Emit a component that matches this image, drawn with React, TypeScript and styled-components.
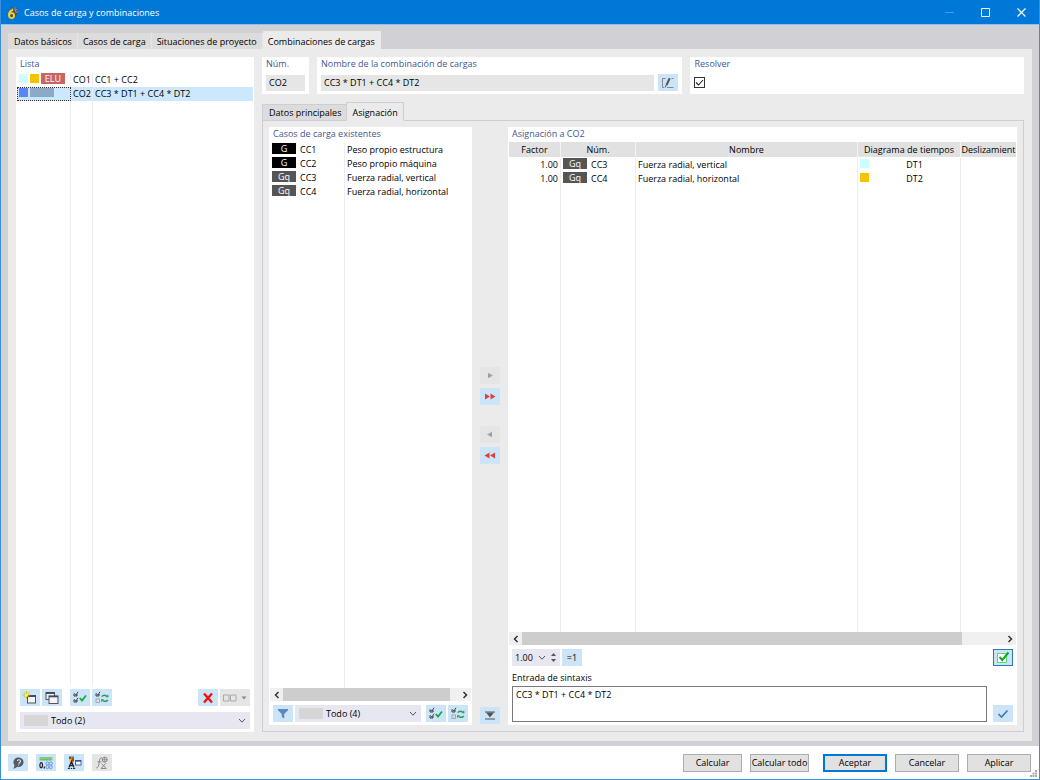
import React from 'react';
import styled, { createGlobalStyle, css } from 'styled-components';

const GlobalStyle = createGlobalStyle`
  *, *::before, *::after { box-sizing: border-box; }
  html, body, #root { height: 100%; margin: 0; }
  body, button, input, select, textarea {
    font-family: "Open Sans", "Noto Sans", sans-serif;
    font-size: 9px;
    line-height: 14px;
    color: #000;
  }
  svg { display: block; flex: none; }
`;

const color = {
  accent: '#0078d7',
  frame: '#d0d0d5',
  surface: '#ebebeb',
  line: '#cdcdd6',
  heading: '#3f5690',
  tool: '#cce4f7',
  toolOff: '#e5e5e5',
  field: '#e6e6e6',
  combo: '#e7e7f2',
};

const Window = styled.div`
  display: flex;
  flex-direction: column;
  min-height: 100vh;
  background: #fff;
  border: 1px solid #3a8fdc;
  border-top: 0;
`;

const TitleBar = styled.header`
  display: flex;
  align-items: center;
  height: 25px;
  padding: 1px 0 0 6px;
  background: ${color.accent};
  color: #fff;
  border-bottom: 1px solid #8fc0ec;
`;

const Title = styled.h1`
  flex: 1;
  margin: 0;
  padding-left: 5px;
  font-size: 9px;
  font-weight: 400;
`;

const CaptionButton = styled.button`
  display: grid;
  place-items: center;
  width: 36px;
  height: 23px;
  padding: 0;
  border: 0;
  background: none;
  color: #fff;
  &:disabled { color: #4a9de3; }
`;

const Workspace = styled.main`
  flex: 1;
  display: flex;
  flex-direction: column;
  padding: 6px 7px 5px;
  background: ${color.frame};
`;

const TabList = styled.div<{ $framed?: boolean }>`
  display: flex;
  align-items: flex-end;
  position: relative;
  z-index: 1;
  ${p => p.$framed && css`margin-bottom: -1px;`}
`;

const Tab = styled.button<{ $active?: boolean; $framed?: boolean }>`
  height: ${p => (p.$active ? 18 : 16)}px;
  padding: ${p => (p.$active ? 3 : 1)}px 5px 0;
  border: 0;
  border-right: 1px solid ${p => (p.$active ? color.surface : '#e6e6e6')};
  background: ${p => (p.$active ? color.surface : '#dcdcdc')};
  font-weight: 500;
  white-space: nowrap;
  ${p => p.$framed && css`
    height: ${p.$active ? 19 : 17}px;
    padding: ${p.$active ? 2 : 0}px 5px 0;
    border: 1px solid ${color.line};
    border-bottom-color: ${p.$active ? color.surface : color.line};
    border-right-width: ${p.$active ? 1 : 0}px;
  `}
  &:first-child { padding-left: 6px; }
`;

const Body = styled.div`
  flex: 1;
  display: flex;
  gap: 8px;
  padding: 8px 8px 9px;
  background: ${color.surface};
`;

const Panel = styled.section`
  display: flex;
  flex-direction: column;
  min-width: 0;
  background: #fff;
`;

const ListPanel = styled(Panel)`
  flex: 0 0 238px;
`;

const PanelHeading = styled.h2<{ $short?: boolean }>`
  margin: 0;
  height: ${p => (p.$short ? 15 : 16)}px;
  padding: 0 4px;
  font-size: 9px;
  line-height: 14px;
  font-weight: 500;
  color: ${color.heading};
`;

const TableArea = styled.div`
  flex: 1;
  display: grid;
  min-height: 0;
  padding: 0 1px;
  overflow: hidden;
`;

const Table = styled.table`
  width: 100%;
  height: 100%;
  table-layout: fixed;
  border-collapse: separate;
  border-spacing: 0;
`;

const Row = styled.tr<{ $selected?: boolean }>`
  height: 14px;
  background: ${p => (p.$selected ? '#cce8ff' : 'none')};
`;

const FillRow = styled.tr`
  height: 100%;
`;

const Cell = styled.td<{ $align?: 'right' | 'center'; $focus?: boolean }>`
  height: 14px;
  padding: 0 2px;
  line-height: 14px;
  text-align: ${p => p.$align || 'left'};
  white-space: nowrap;
  overflow: hidden;
  border-right: 1px solid #ededed;
  &:last-child { border-right: 0; }
  ${p => p.$focus && css`
    outline: 1px dotted #333;
    outline-offset: -1px;
  `}
`;

const HeadCell = styled.th`
  height: 16px;
  padding: 0;
  font-weight: 500;
  line-height: 14px;
  text-align: center;
  white-space: nowrap;
  overflow: hidden;
  background: #e1e1e1;
  background-clip: padding-box;
  border-right: 1px solid #f4f4f4;
  border-bottom: 1px solid #fff;
  &:last-child { border-right: 0; }
`;

const Inline = styled.div<{ $gap?: number }>`
  display: flex;
  align-items: flex-start;
  gap: ${p => p.$gap ?? 2}px;
  height: 14px;
`;

const CenteredText = styled.span`
  flex: 1;
  text-align: center;
`;

const Swatch = styled.span<{ $color: string; $wide?: boolean }>`
  width: ${p => (p.$wide ? 24 : 9)}px;
  height: 9px;
  margin-top: 1px;
  flex: none;
  background: ${p => p.$color};
`;

const Badge = styled.span<{ $color: string }>`
  width: 24px;
  height: 11px;
  flex: none;
  background: ${p => p.$color};
  color: #fff;
  line-height: 11px;
  text-align: center;
`;

const Toolbar = styled.div<{ $inset?: string }>`
  display: flex;
  align-items: center;
  gap: 2px;
  padding: ${p => p.$inset || '0 4px'};
`;

const Spacer = styled.div<{ $size?: number }>`
  flex: ${p => (p.$size === undefined ? '1' : `0 0 ${p.$size}px`)};
`;

const ToolButton = styled.button<{ $wide?: boolean; $pressed?: boolean }>`
  display: flex;
  align-items: center;
  justify-content: center;
  gap: 4px;
  flex: none;
  width: ${p => (p.$wide ? 30 : 20)}px;
  height: 17px;
  padding: 0;
  border: ${p => (p.$pressed ? '1px solid #2b78c0' : '0')};
  background: ${color.tool};
  font-weight: 500;
  &:disabled { background: ${color.toolOff}; color: #999; }
`;

const Combo = styled.div`
  flex: 1;
  display: flex;
  align-items: center;
  height: 17px;
  padding: 0 4px;
  background: ${color.combo};
`;

const ComboSwatch = styled.span`
  width: 24px;
  height: 11px;
  background: #d6d6d6;
`;

const ComboSelect = styled.select`
  flex: 1;
  min-width: 0;
  height: 17px;
  padding: 0 3px;
  border: 0;
  appearance: none;
  background: none;
  font-weight: 500;
`;

const Detail = styled.div`
  flex: 1;
  display: flex;
  flex-direction: column;
  min-width: 0;
`;

const SummaryRow = styled.div`
  display: flex;
  gap: 8px;
  height: 37px;
  margin-bottom: 8px;
`;

const SummaryPanel = styled(Panel)<{ $basis: string }>`
  flex: ${p => p.$basis};
`;

const FieldLabel = styled.label`
  height: 17px;
  padding: 0 4px;
  font-weight: 500;
  color: ${color.heading};
`;

const FieldRow = styled.div`
  display: flex;
  align-items: center;
  gap: 4px;
  height: 17px;
  padding: 0 4px;
`;

const ReadOnlyField = styled.input`
  flex: 1;
  min-width: 0;
  height: 16px;
  padding: 0 3px;
  border: 0;
  background: ${color.field};
`;

const CheckWrap = styled.span`
  display: grid;
  > * { grid-area: 1 / 1; }
  svg { pointer-events: none; }
`;

const CheckInput = styled.input`
  appearance: none;
  width: 11px;
  height: 11px;
  margin: 0;
  border: 1px solid #333;
  background: #fff;
`;

const TabPage = styled.div`
  flex: 1;
  display: flex;
  padding: 6px;
  border: 1px solid ${color.line};
`;

const SourcePanel = styled(Panel)`
  flex: 0 0 203px;
  padding-bottom: 3px;
`;

const TransferColumn = styled.div`
  flex: 0 0 36px;
  display: flex;
  flex-direction: column;
  align-items: center;
  padding-bottom: 1px;
`;

const TransferGroup = styled.div`
  flex: 1;
  display: flex;
  flex-direction: column;
  align-items: center;
  justify-content: center;
  gap: 4px;
  padding-bottom: 3px;
`;

const TargetPanel = styled(Panel)`
  flex: 1;
  padding-bottom: 3px;
`;

const ScrollTrack = styled.div`
  display: flex;
  height: 13px;
  margin: 0 1px;
  background: #f0f0f0;
`;

const ScrollArrow = styled.button`
  display: grid;
  place-items: center;
  width: 13px;
  height: 13px;
  padding: 0;
  border: 0;
  background: none;
`;

const ScrollPart = styled.div<{ $share: number; $thumb?: boolean }>`
  flex: ${p => p.$share};
  background: ${p => (p.$thumb ? '#cdcdcd' : 'none')};
`;

const FactorBox = styled.div`
  display: flex;
  align-items: center;
  gap: 2px;
  width: 48px;
  height: 17px;
  padding: 0 4px 0 3px;
  background: ${color.combo};
`;

const FactorInput = styled.input`
  flex: 1;
  min-width: 0;
  padding: 0;
  border: 0;
  background: none;
`;

const SpinColumn = styled.div`
  display: flex;
  flex-direction: column;
  gap: 3px;
  margin-left: 3px;
`;

const GlyphButton = styled.button`
  padding: 0;
  border: 0;
  background: none;
`;

const SyntaxLabel = styled.label`
  height: 20px;
  padding: 5px 4px 0;
  font-weight: 500;
`;

const SyntaxRow = styled.div`
  display: flex;
  align-items: flex-end;
  gap: 6px;
  padding: 0 4px;
`;

const SyntaxInput = styled.textarea`
  flex: 1;
  height: 36px;
  padding: 1px 3px;
  border: 1px solid #7a7a7a;
  resize: none;
  background: #fff;
`;

const Footer = styled.footer`
  position: relative;
  display: flex;
  align-items: center;
  gap: 8px;
  height: 33px;
  padding: 0 8px 0 7px;
`;

const DialogButton = styled.button<{ $primary?: boolean }>`
  width: 64px;
  height: 18px;
  margin-left: ${p => (p.$primary ? 6 : 0)}px;
  padding: 0;
  background: #e1e1e1;
  border: ${p => (p.$primary ? `2px solid ${color.accent}` : '1px solid #adadad')};
  font-weight: 500;
  line-height: 14px;
`;

const NarrowButton = styled(DialogButton)`
  width: 59px;
`;

const SizeGrip = styled.div`
  position: absolute;
  right: 1px;
  bottom: 1px;
`;

const AppIcon = () => (
  <svg width="12" height="14" viewBox="0 0 12 14">
    <path d="M4 1l6 1 1 5-3 4-5 0z" fill="#46535e" />
    <path d="M5 2l1 2M8 1.500l0 3M10 3l-2 2M11 6l-3 0" stroke="#a9b7c2" strokeWidth=".8" />
    <path d="M6 4C3.400 4.600 2 7 2 9.400" fill="none" stroke="#ffce1f" strokeWidth="2" />
    <circle cx="4.600" cy="9.600" r="2.500" fill="none" stroke="#ffce1f" strokeWidth="1.900" />
  </svg>
);

const Chevron = () => (
  <svg width="8" height="6" viewBox="0 0 8 6">
    <path d="M1 1l3 3.200L7 1" fill="none" stroke="#555" strokeWidth="1" />
  </svg>
);

const Arrow = ({ left }: { left?: boolean }) => (
  <svg width="6" height="8" viewBox="0 0 6 8">
    <path d={left ? 'M4.500 1L1.500 4l3 3' : 'M1.500 1l3 3-3 3'} fill="none" stroke="#333" strokeWidth="1.500" />
  </svg>
);

const Tri = ({ dir, fill, double }: { dir: 'l' | 'r'; fill: string; double?: boolean }) => (
  <svg width="12" height="7" viewBox="0 0 12 7" fill={fill}>
    {double ? (
      dir === 'r' ? <path d="M1 .5l5 3-5 3zM6.500.5l5 3-5 3z" /> : <path d="M5.500.5l-5 3 5 3zM11 .5l-5 3 5 3z" />
    ) : (
      dir === 'r' ? <path d="M4 .8l5 2.700-5 2.700z" /> : <path d="M8 .8L3 3.500l5 2.700z" />
    )}
  </svg>
);

const NewIcon = () => (
  <svg width="16" height="14" viewBox="0 0 16 14">
    <rect x="5.500" y="4.500" width="8" height="7.500" fill="#f4f4f4" stroke="#555" />
    <path d="M5 5.200h9" stroke="#446" strokeWidth="1.600" />
    <path d="M4.500 0v8M.5 4h8M1.600 1.200l5.800 5.600M7.400 1.200L1.600 6.800" stroke="#c9b800" strokeWidth=".8" />
    <circle cx="4.500" cy="4" r="1.800" fill="#fff04a" />
  </svg>
);

const CopyIcon = () => (
  <svg width="14" height="14" viewBox="0 0 14 14">
    <rect x="1" y="1.500" width="8.500" height="7" fill="#e9f3fb" stroke="#555" />
    <path d="M1 2h8.500" stroke="#444" strokeWidth="1.800" />
    <rect x="4" y="5" width="9" height="7.500" fill="#f4f4f4" stroke="#555" />
    <path d="M4 5.500h9" stroke="#446" strokeWidth="1.600" />
  </svg>
);

const CheckAllIcon = ({ swap }: { swap?: boolean }) => (
  <svg width="14" height="13" viewBox="0 0 14 13" fill="none">
    <path d="M1 2.500v2.500h3V3M1.600 2.600l1.200 1.600L5 .8" stroke="#333" strokeWidth=".9" />
    {swap ? (
      <>
        <rect x="1" y="8" width="3.500" height="3.500" stroke="#999" strokeWidth=".8" />
        <path d="M6.800 5.600c1.200-1.600 3-1.600 4.700-.6M12.800 9c-1.200 1.600-3 1.600-4.700.6" stroke="#2c9a53" strokeWidth="1.500" />
        <path d="M10.500 6.300h3l-.4-3zM9 8.200H6l.4 3z" fill="#2c9a53" />
      </>
    ) : (
      <>
        <path d="M1 8.500V11h3V9M1.600 8.600l1.200 1.600L5 6.800" stroke="#333" strokeWidth=".9" />
        <path d="M6.800 7l2.200 2.600L13 4.500" stroke="#18a848" strokeWidth="1.800" />
      </>
    )}
  </svg>
);

const DeleteIcon = () => (
  <svg width="12" height="12" viewBox="0 0 12 12">
    <path d="M2 1.500l8 9M10 1.500l-8 9" stroke="#ee1111" strokeWidth="2.400" />
  </svg>
);

const PairIcon = () => (
  <svg width="14" height="8" viewBox="0 0 14 8" fill="none" stroke="#a8a8a8">
    <path d="M.5 1h5.500v6H.5zM7.500 1H13v6H7.500z" />
  </svg>
);

const DownIcon = () => (
  <svg width="6" height="4" viewBox="0 0 6 4"><path d="M.5.500h5l-2.500 3z" fill="#888" /></svg>
);

const EditIcon = () => (
  <svg width="14" height="12" viewBox="0 0 14 12" fill="none">
    <path d="M4.500 1.500H1.500v9H3.500M6 10.500h6.500M10.500 1.500h2" stroke="#888" />
    <path d="M5.500 8L8.700 1.200" stroke="#555" strokeWidth="2" />
    <path d="M4.500 10.300l.6-2.300" stroke="#555" />
  </svg>
);

const FilterIcon = () => (
  <svg width="12" height="11" viewBox="0 0 12 11">
    <path d="M1 1h10v1.200L7.200 6v4.500L4.800 9V6L1 2.200z" fill="#5f86bf" />
  </svg>
);

const CollapseIcon = () => (
  <svg width="12" height="9" viewBox="0 0 12 9">
    <path d="M1 1h10M1 8h10" stroke="#555" strokeWidth="1.200" />
    <path d="M2 1.500h8L6 6.500z" fill="#555" />
  </svg>
);

const GreenCheckIcon = () => (
  <svg width="14" height="13" viewBox="0 0 14 13" fill="none">
    <rect x="1.500" y="2.500" width="9" height="9" fill="#fff" stroke="#5fd96a" />
    <path d="M3.500 6l2.800 3L12.500 1.500" stroke="#11a52c" strokeWidth="2" />
  </svg>
);

const BlueCheckIcon = () => (
  <svg width="12" height="10" viewBox="0 0 12 10">
    <path d="M1.500 5l3 3L10.500 1.500" fill="none" stroke="#4477b8" strokeWidth="1.700" />
  </svg>
);

const HelpIcon = () => (
  <svg width="14" height="14" viewBox="0 0 14 14">
    <path d="M8 1.500a4.700 4.700 0 1 1-1.500 9.200L2.500 13l1-4A4.700 4.700 0 0 1 8 1.500z" fill="#555b60" />
    <path d="M6.300 5c.3-1.600 3.200-1.600 3.200.2 0 1.300-1.600 1.200-1.700 2.600M7.600 8.600v1" fill="none" stroke="#dbeaf6" strokeWidth="1.100" />
  </svg>
);

const DecimalsIcon = () => (
  <svg width="16" height="14" viewBox="0 0 16 14">
    <rect x="1.500" y="1" width="13" height="3.500" fill="#7fc97f" />
    <path d="M4 3v1.500M6.500 3v1.500M9 3v1.500M11.500 3v1.500" stroke="#4c9a55" strokeWidth=".7" />
    <ellipse cx="3.200" cy="9.200" rx="1.300" ry="2.500" fill="none" stroke="#222" strokeWidth="1.200" />
    <path d="M6.300 10.500v2" stroke="#222" strokeWidth="1.200" />
    <g fill="#c3d8f8" stroke="#5b8ee0" strokeWidth=".8">
      <ellipse cx="9.400" cy="7.500" rx="1.500" ry="1.700" /><ellipse cx="12.800" cy="7.500" rx="1.500" ry="1.700" />
      <ellipse cx="9.400" cy="11" rx="1.500" ry="1.700" /><ellipse cx="12.800" cy="11" rx="1.500" ry="1.700" />
    </g>
  </svg>
);

const DisplayIcon = () => (
  <svg width="15" height="14" viewBox="0 0 15 14">
    <path d="M2 .5h2.500V3H2z" fill="#e02020" /><path d="M4.500.5H7V3H4.500z" fill="#18a830" />
    <path d="M2 3h2.500v2.500H2z" fill="#e8d000" /><path d="M4.500 3H7v2.500H4.500z" fill="#d02020" />
    <path d="M2 11.500L4.500 5.500l2.500 6M3 9.500h3" stroke="#222" strokeWidth="1.300" fill="none" />
    <path d="M.8 12.500h2M3.800 12.500h1.400M6.200 12.500h2" stroke="#222" />
    <rect x="8.500" y="4.500" width="5.500" height="4.500" fill="#fff" stroke="#335a9c" strokeWidth=".9" />
    <path d="M8.500 5H14" stroke="#224a9c" strokeWidth="1.300" />
  </svg>
);

const FormulaIcon = () => (
  <svg width="14" height="14" viewBox="0 0 14 14" fill="none" stroke="#888">
    <path d="M7 1.800C5 1.300 4.700 3.500 4.300 6S3.500 12 1.200 12M2.300 5.800h4M6.500 7.500l4.200 4.500M10.700 7.500L6.500 12M6 12.500h5.500" strokeWidth="1" />
    <circle cx="9.700" cy="3.700" r="2.500" fill="#ddd" />
    <path d="M9.700 1v5.400M7 3.700h5.400" strokeWidth=".8" />
  </svg>
);

const loadCases = [
  { no: 'CC1', tag: 'G', name: 'Peso propio estructura' },
  { no: 'CC2', tag: 'G', name: 'Peso propio máquina' },
  { no: 'CC3', tag: 'Gq', name: 'Fuerza radial, vertical' },
  { no: 'CC4', tag: 'Gq', name: 'Fuerza radial, horizontal' },
];

const assigned = [
  { factor: '1.00', no: 'CC3', name: 'Fuerza radial, vertical', diagram: 'DT1', tint: '#ccffff' },
  { factor: '1.00', no: 'CC4', name: 'Fuerza radial, horizontal', diagram: 'DT2', tint: '#f5c400' },
];

const ScrollBar = ({ share, rest }: { share: number; rest: number }) => (
  <ScrollTrack>
    <ScrollArrow aria-label="Desplazar a la izquierda"><Arrow left /></ScrollArrow>
    <ScrollPart $thumb $share={share} />
    <ScrollPart $share={rest} />
    <ScrollArrow aria-label="Desplazar a la derecha"><Arrow /></ScrollArrow>
  </ScrollTrack>
);

const FilterCombo = ({ text }: { text: string }) => (
  <Combo>
    <ComboSwatch />
    <ComboSelect aria-label="Filtro" defaultValue={text}>
      <option>{text}</option>
    </ComboSelect>
    <Chevron />
  </Combo>
);

const CombinationList = () => (
  <ListPanel>
    <PanelHeading>Lista</PanelHeading>
    <TableArea>
      <Table aria-label="Lista">
        <colgroup><col style={{ width: 54 }} /><col style={{ width: 22 }} /><col /></colgroup>
        <tbody>
          <Row>
            <Cell>
              <Inline><Swatch $color="#ccffff" /><Swatch $color="#f5c400" /><Badge $color="#c96565">ELU</Badge></Inline>
            </Cell>
            <Cell>CO1</Cell>
            <Cell>CC1 + CC2</Cell>
          </Row>
          <Row $selected>
            <Cell $focus>
              <Inline><Swatch $color="#5b84f5" /><Swatch $wide $color="#8caac8" /></Inline>
            </Cell>
            <Cell>CO2</Cell>
            <Cell>CC3 * DT1 + CC4 * DT2</Cell>
          </Row>
          <FillRow><Cell /><Cell /><Cell /></FillRow>
        </tbody>
      </Table>
    </TableArea>
    <Toolbar $inset="4px 4px 6px">
      <ToolButton aria-label="Nuevo"><NewIcon /></ToolButton>
      <ToolButton aria-label="Copiar"><CopyIcon /></ToolButton>
      <Spacer $size={4} />
      <ToolButton aria-label="Seleccionar todo"><CheckAllIcon /></ToolButton>
      <ToolButton aria-label="Invertir selección"><CheckAllIcon swap /></ToolButton>
      <Spacer />
      <ToolButton aria-label="Eliminar"><DeleteIcon /></ToolButton>
      <ToolButton aria-label="Renumerar" $wide disabled><PairIcon /><DownIcon /></ToolButton>
    </Toolbar>
    <Toolbar $inset="0 4px 3px"><FilterCombo text="Todo (2)" /></Toolbar>
  </ListPanel>
);

const Summary = () => (
  <SummaryRow>
    <SummaryPanel $basis="0 0 47px">
      <FieldLabel htmlFor="num">Núm.</FieldLabel>
      <FieldRow><ReadOnlyField id="num" readOnly value="CO2" /></FieldRow>
    </SummaryPanel>
    <SummaryPanel $basis="366 1 0">
      <FieldLabel htmlFor="nombre">Nombre de la combinación de cargas</FieldLabel>
      <FieldRow>
        <ReadOnlyField id="nombre" readOnly value="CC3 * DT1 + CC4 * DT2" />
        <ToolButton aria-label="Editar nombre"><EditIcon /></ToolButton>
      </FieldRow>
    </SummaryPanel>
    <SummaryPanel $basis="334 1 0">
      <FieldLabel htmlFor="resolver">Resolver</FieldLabel>
      <FieldRow>
        <CheckWrap>
          <CheckInput id="resolver" type="checkbox" defaultChecked />
          <svg width="11" height="11" viewBox="0 0 11 11">
            <path d="M2 5.500l2.500 2.500L9 3" fill="none" stroke="#222" strokeWidth="1.100" />
          </svg>
        </CheckWrap>
      </FieldRow>
    </SummaryPanel>
  </SummaryRow>
);

const ExistingCases = () => (
  <SourcePanel>
    <PanelHeading>Casos de carga existentes</PanelHeading>
    <TableArea>
      <Table aria-label="Casos de carga existentes">
        <colgroup><col style={{ width: 75 }} /><col /></colgroup>
        <tbody>
          {loadCases.map(c => (
            <Row key={c.no}>
              <Cell>
                <Inline $gap={4}>
                  <Badge $color={c.tag === 'G' ? '#000' : '#555'}>{c.tag}</Badge>
                  {c.no}
                </Inline>
              </Cell>
              <Cell>{c.name}</Cell>
            </Row>
          ))}
          <FillRow><Cell /><Cell /></FillRow>
        </tbody>
      </Table>
    </TableArea>
    <ScrollBar share={168} rest={8} />
    <Toolbar $inset="4px 4px 0">
      <ToolButton aria-label="Filtrar"><FilterIcon /></ToolButton>
      <FilterCombo text="Todo (4)" />
      <Spacer $size={1} />
      <ToolButton aria-label="Seleccionar todo"><CheckAllIcon /></ToolButton>
      <ToolButton aria-label="Invertir selección"><CheckAllIcon swap /></ToolButton>
    </Toolbar>
  </SourcePanel>
);

const Transfer = () => (
  <TransferColumn>
    <TransferGroup>
      <ToolButton aria-label="Añadir" disabled><Tri dir="r" fill="#a0a0a0" /></ToolButton>
      <ToolButton aria-label="Añadir todo"><Tri dir="r" double fill="#e0403c" /></ToolButton>
      <Spacer $size={13} />
      <ToolButton aria-label="Quitar" disabled><Tri dir="l" fill="#a0a0a0" /></ToolButton>
      <ToolButton aria-label="Quitar todo"><Tri dir="l" double fill="#e0403c" /></ToolButton>
    </TransferGroup>
    <ToolButton aria-label="Contraer"><CollapseIcon /></ToolButton>
  </TransferColumn>
);

const Assignment = () => (
  <TargetPanel>
    <PanelHeading $short>Asignación a CO2</PanelHeading>
    <TableArea>
      <Table aria-label="Asignación a CO2">
        <colgroup>
          <col style={{ width: 52 }} /><col style={{ width: 75 }} /><col />
          <col style={{ width: 103 }} /><col style={{ width: 55 }} />
        </colgroup>
        <thead>
          <tr>
            <HeadCell>Factor</HeadCell><HeadCell>Núm.</HeadCell><HeadCell>Nombre</HeadCell>
            <HeadCell>Diagrama de tiempos</HeadCell><HeadCell>Deslizamient</HeadCell>
          </tr>
        </thead>
        <tbody>
          {assigned.map(a => (
            <Row key={a.no}>
              <Cell $align="right">{a.factor}</Cell>
              <Cell><Inline $gap={4}><Badge $color="#555">Gq</Badge>{a.no}</Inline></Cell>
              <Cell>{a.name}</Cell>
              <Cell><Inline><Swatch $color={a.tint} /><CenteredText>{a.diagram}</CenteredText></Inline></Cell>
              <Cell />
            </Row>
          ))}
          <FillRow><Cell /><Cell /><Cell /><Cell /><Cell /></FillRow>
        </tbody>
      </Table>
    </TableArea>
    <ScrollBar share={440} rest={41} />
    <Toolbar $inset="4px 4px 0">
      <FactorBox>
        <FactorInput aria-label="Factor" defaultValue="1.00" />
        <GlyphButton aria-label="Valores"><Chevron /></GlyphButton>
        <SpinColumn>
          <GlyphButton aria-label="Aumentar"><svg width="5" height="3" viewBox="0 0 5 3"><path d="M0 3l2.500-3L5 3z" fill="#555" /></svg></GlyphButton>
          <GlyphButton aria-label="Disminuir"><svg width="5" height="3" viewBox="0 0 5 3"><path d="M0 0l2.500 3L5 0z" fill="#555" /></svg></GlyphButton>
        </SpinColumn>
      </FactorBox>
      <ToolButton>=1</ToolButton>
      <Spacer />
      <ToolButton aria-label="Comprobar" $pressed><GreenCheckIcon /></ToolButton>
    </Toolbar>
    <SyntaxLabel htmlFor="sintaxis">Entrada de sintaxis</SyntaxLabel>
    <SyntaxRow>
      <SyntaxInput id="sintaxis" defaultValue="CC3 * DT1 + CC4 * DT2" />
      <ToolButton aria-label="Aplicar sintaxis"><BlueCheckIcon /></ToolButton>
    </SyntaxRow>
  </TargetPanel>
);

export default function App() {
  return (
    <>
      <GlobalStyle />
      <Window>
        <TitleBar>
          <AppIcon />
          <Title>Casos de carga y combinaciones</Title>
          <CaptionButton aria-label="Minimizar" disabled>
            <svg width="9" height="9" viewBox="0 0 9 9"><path d="M0 4.500h9" stroke="currentColor" /></svg>
          </CaptionButton>
          <CaptionButton aria-label="Maximizar">
            <svg width="9" height="9" viewBox="0 0 9 9"><path d="M.5.500h8v8h-8z" fill="none" stroke="currentColor" /></svg>
          </CaptionButton>
          <CaptionButton aria-label="Cerrar">
            <svg width="9" height="9" viewBox="0 0 9 9"><path d="M.5.500l8 8M8.500.500l-8 8" stroke="currentColor" strokeWidth="1.200" /></svg>
          </CaptionButton>
        </TitleBar>
        <Workspace>
          <TabList role="tablist">
            <Tab role="tab">Datos básicos</Tab>
            <Tab role="tab">Casos de carga</Tab>
            <Tab role="tab">Situaciones de proyecto</Tab>
            <Tab role="tab" aria-selected $active>Combinaciones de cargas</Tab>
          </TabList>
          <Body>
            <CombinationList />
            <Detail>
              <Summary />
              <TabList role="tablist" $framed>
                <Tab role="tab" $framed>Datos principales</Tab>
                <Tab role="tab" aria-selected $framed $active>Asignación</Tab>
              </TabList>
              <TabPage>
                <ExistingCases />
                <Transfer />
                <Assignment />
              </TabPage>
            </Detail>
          </Body>
        </Workspace>
        <Footer>
          <ToolButton aria-label="Ayuda"><HelpIcon /></ToolButton>
          <ToolButton aria-label="Unidades y decimales"><DecimalsIcon /></ToolButton>
          <ToolButton aria-label="Mostrar propiedades"><DisplayIcon /></ToolButton>
          <ToolButton aria-label="Fórmula" disabled><FormulaIcon /></ToolButton>
          <Spacer />
          <NarrowButton>Calcular</NarrowButton>
          <NarrowButton>Calcular todo</NarrowButton>
          <DialogButton $primary>Aceptar</DialogButton>
          <DialogButton>Cancelar</DialogButton>
          <DialogButton>Aplicar</DialogButton>
          <SizeGrip>
            <svg width="8" height="8" viewBox="0 0 8 8" fill="#aaa">
              <path d="M5 0h2v2H5zM2.500 2.500h2v2h-2zM5 2.500h2v2H5zM0 5h2v2H0zM2.500 5h2v2h-2zM5 5h2v2H5z" />
            </svg>
          </SizeGrip>
        </Footer>
      </Window>
    </>
  );
}
